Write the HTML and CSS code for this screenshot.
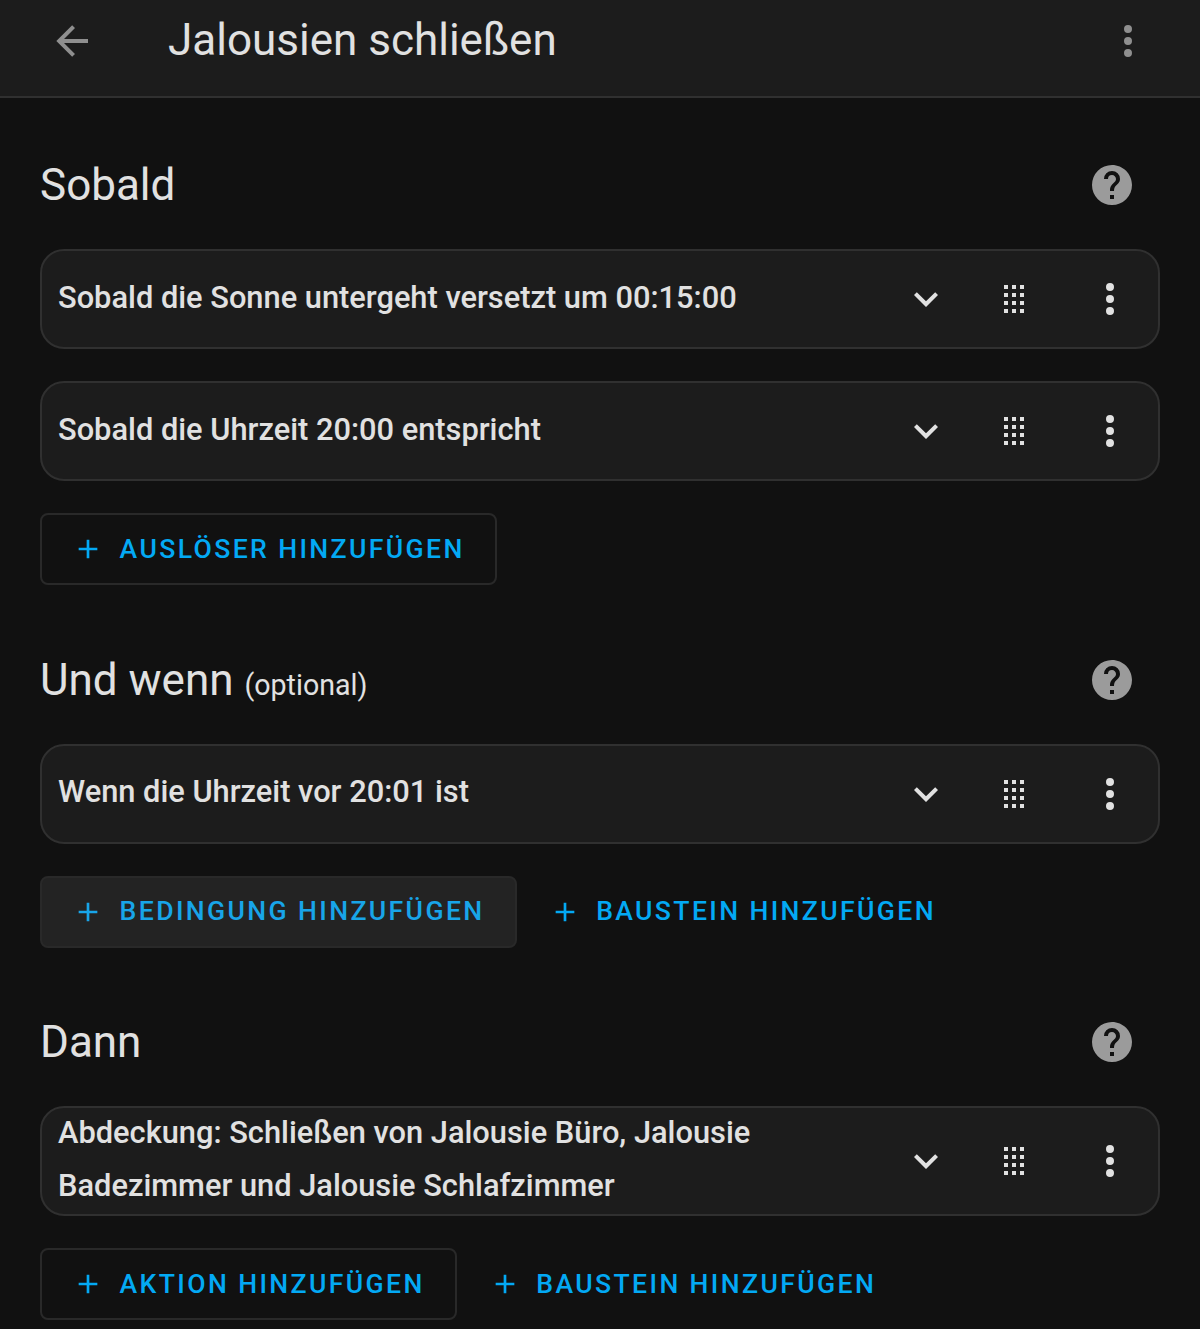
FILE: index.html
```html
<!DOCTYPE html>
<html lang="de">
<head>
  <meta charset="UTF-8">
  <meta name="viewport" content="width=device-width, initial-scale=1.0">
  <title>Jalousien schließen</title>

  <link rel="stylesheet" href="styles.css">
</head>
<body>

<svg class="sprite">
  <symbol id="back" viewBox="0 0 24 24"><path d="M20,11V13H8L13.5,18.5L12.08,19.92L4.16,12L12.08,4.08L13.5,5.5L8,11H20Z"/></symbol>
  <symbol id="dots" viewBox="0 0 24 24"><path d="M12,16A2,2 0 0,1 14,18A2,2 0 0,1 12,20A2,2 0 0,1 10,18A2,2 0 0,1 12,16M12,10A2,2 0 0,1 14,12A2,2 0 0,1 12,14A2,2 0 0,1 10,12A2,2 0 0,1 12,10M12,4A2,2 0 0,1 14,6A2,2 0 0,1 12,8A2,2 0 0,1 10,6A2,2 0 0,1 12,4Z"/></symbol>
  <symbol id="help" viewBox="0 0 24 24"><path d="M15.07,11.25L14.17,12.17C13.45,12.89 13,13.5 13,15H11V14.5C11,13.39 11.45,12.39 12.17,11.67L13.41,10.41C13.78,10.05 14,9.55 14,9C14,7.89 13.1,7 12,7A2,2 0 0,0 10,9H8A4,4 0 0,1 12,5A4,4 0 0,1 16,9C16,9.88 15.64,10.67 15.07,11.25M13,19H11V17H13M12,2A10,10 0 0,0 2,12A10,10 0 0,0 12,22A10,10 0 0,0 22,12C22,6.47 17.5,2 12,2Z"/></symbol>
  <symbol id="chevron" viewBox="0 0 24 24"><path d="M7.41,8.58L12,13.17L16.59,8.58L18,10L12,16L6,10L7.41,8.58Z"/></symbol>
  <symbol id="grid" viewBox="0 0 24 24"><path d="M7,5H9V7H7ZM11,5H13V7H11ZM15,5H17V7H15ZM7,9H9V11H7ZM11,9H13V11H11ZM15,9H17V11H15ZM7,13H9V15H7ZM11,13H13V15H11ZM15,13H17V15H15ZM7,17H9V19H7ZM11,17H13V19H11ZM15,17H17V19H15Z"/></symbol>
  <symbol id="plus" viewBox="0 0 24 24"><path d="M19,13H13V19H11V13H5V11H11V5H13V11H19V13Z"/></symbol>
</svg>

<header class="toolbar">
  <svg class="icon"><use href="#back"/></svg>
  <h1>Jalousien schließen</h1>
  <svg class="icon"><use href="#dots"/></svg>
</header>

<main>
  <section>
    <div class="section-header">
      <h2>Sobald</h2>
      <svg class="icon"><use href="#help"/></svg>
    </div>
    <div class="card">
      <h3>Sobald die Sonne untergeht versetzt um 00:15:00</h3>
      <svg class="icon"><use href="#chevron"/></svg>
      <svg class="icon handle"><use href="#grid"/></svg>
      <svg class="icon menu"><use href="#dots"/></svg>
    </div>
    <div class="card">
      <h3>Sobald die Uhrzeit 20:00 entspricht</h3>
      <svg class="icon"><use href="#chevron"/></svg>
      <svg class="icon handle"><use href="#grid"/></svg>
      <svg class="icon menu"><use href="#dots"/></svg>
    </div>
    <div class="buttons">
      <button class="outlined"><svg><use href="#plus"/></svg><span>Auslöser hinzufügen</span></button>
    </div>
  </section>

  <section>
    <div class="section-header">
      <h2>Und wenn <span class="small">(optional)</span></h2>
      <svg class="icon"><use href="#help"/></svg>
    </div>
    <div class="card">
      <h3>Wenn die Uhrzeit vor 20:01 ist</h3>
      <svg class="icon"><use href="#chevron"/></svg>
      <svg class="icon handle"><use href="#grid"/></svg>
      <svg class="icon menu"><use href="#dots"/></svg>
    </div>
    <div class="buttons">
      <button class="outlined focused"><svg><use href="#plus"/></svg><span>Bedingung hinzufügen</span></button>
      <button><svg><use href="#plus"/></svg><span>Baustein hinzufügen</span></button>
    </div>
  </section>

  <section>
    <div class="section-header">
      <h2>Dann</h2>
      <svg class="icon"><use href="#help"/></svg>
    </div>
    <div class="card">
      <h3>Abdeckung: Schließen von Jalousie Büro, Jalousie Badezimmer und Jalousie Schlafzimmer</h3>
      <svg class="icon"><use href="#chevron"/></svg>
      <svg class="icon handle"><use href="#grid"/></svg>
      <svg class="icon menu"><use href="#dots"/></svg>
    </div>
    <div class="buttons">
      <button class="outlined"><svg><use href="#plus"/></svg><span>Aktion hinzufügen</span></button>
      <button><svg><use href="#plus"/></svg><span>Baustein hinzufügen</span></button>
    </div>
  </section>
</main>

</body>
</html>
```

FILE: styles.css
```css
* {
  box-sizing: border-box;
}

body {
  margin: 0;
  background-color: #111111;
  color: #e1e1e1;
  font-family: Roboto, sans-serif;
}

h1, h2, h3 {
  margin: 0;
}

.sprite {
  display: none;
}

.icon {
  flex: none;
  width: 48px;
  height: 48px;
  fill: currentColor;
}

.toolbar {
  display: flex;
  align-items: center;
  height: 98px;
  padding: 0 48px 15px;
  background-color: #1c1c1c;
  border-bottom: 2px solid #303030;
}

.toolbar .icon {
  fill: #8f8f8f;
}

.toolbar h1 {
  flex: 1;
  margin-left: 72px;
  padding-bottom: 2px;
  font-size: 44px;
  font-weight: 400;
  line-height: 60px;
}

main {
  padding: 39px 40px 0;
}

section {
  display: flex;
  flex-direction: column;
  gap: 32px;
  margin-bottom: 46.6px;
}

section:last-child {
  margin-bottom: 0;
}

.section-header {
  display: flex;
  align-items: center;
  justify-content: space-between;
  height: 96px;
  margin-bottom: -16px;
  padding-right: 24px;
}

.section-header h2 {
  font-size: 44px;
  font-weight: 400;
}

.section-header .icon {
  fill: #9b9b9b;
}

.small {
  font-size: 28.6px;
}

.card {
  display: flex;
  align-items: center;
  min-height: 100px;
  padding: 0 24px 0 16px;
  background-color: #1c1c1c;
  border: 2px solid #303030;
  border-radius: 24px;
}

.card h3 {
  flex: 1;
  margin: -2px 40px 2px 0;
  font-size: 30.8px;
  font-weight: 500;
  line-height: 53px;
}

.handle {
  margin-left: 40px;
}

.menu {
  margin-left: 48px;
}

.buttons {
  display: flex;
}

button {
  display: flex;
  align-items: center;
  height: 72px;
  padding: 0 32px;
  background-color: transparent;
  border: none;
  border-radius: 8px;
  color: #03a9f4;
  font-family: inherit;
  font-size: 26.6px;
  font-weight: 500;
  letter-spacing: 0.0892857em;
  text-transform: uppercase;
  cursor: pointer;
}

button svg {
  width: 32px;
  height: 32px;
  margin-right: 15.6px;
  fill: currentColor;
}

button span {
  padding-bottom: 2px;
}

.outlined {
  padding: 0 30px;
  border: 2px solid #292929;
}

.focused {
  background-color: #232323;
  color: #18a5e9;
}
```
